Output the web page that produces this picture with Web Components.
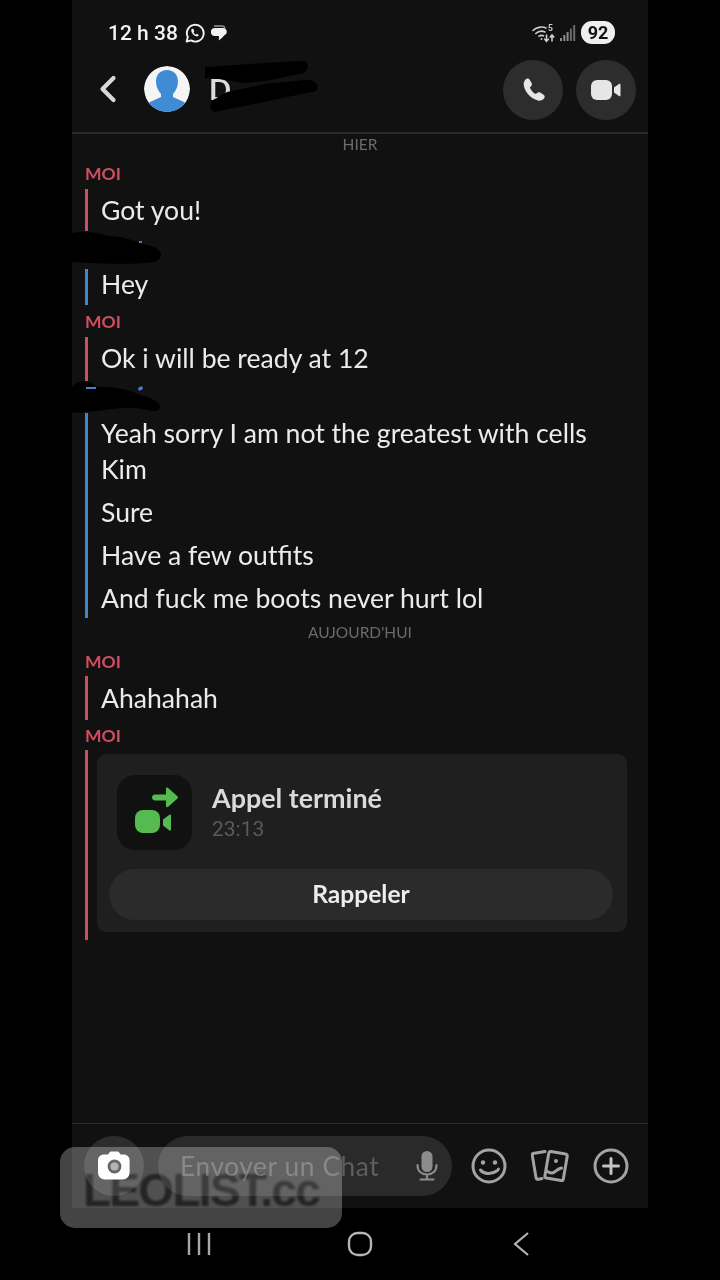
<!DOCTYPE html>
<html lang="fr"><head><meta charset="utf-8"><title>Chat</title>
<style>
html,body{margin:0;padding:0;background:#000;height:1280px;overflow:hidden}
body{font-family:Lato,"Open Sans",sans-serif;color:#e9e9e9;position:relative}
</style></head><body>
<x-phone>
  <x-status-bar slot="top"></x-status-bar>
  <x-chat-header slot="top"></x-chat-header>
  <x-day style="height:23px;--pt:1px">HIER</x-day>
  <x-sender kind="me">MOI</x-sender>
  <x-group kind="me" style="--pt:3px;--pb:3px"><x-msg>Got you!</x-msg></x-group>
  <x-sender kind="other" style="height:38px">&#160;</x-sender>
  <x-group kind="other" style="--pt:0px;--pb:0px"><x-msg style="margin-top:-3px;margin-bottom:3px">Hey</x-msg></x-group>
  <x-sender kind="me">MOI</x-sender>
  <x-group kind="me" style="--pt:3px;--pb:5px"><x-msg>Ok i will be ready at 12</x-msg></x-group>
  <x-sender kind="other">&#160;</x-sender>
  <x-group kind="other" style="--pt:2px;--pb:2px;--gap:7px">
    <x-msg>Yeah sorry I am not the greatest with cells<br>Kim</x-msg>
    <x-msg>Sure</x-msg>
    <x-msg>Have a few outfits</x-msg>
    <x-msg>And fuck me boots never hurt lol</x-msg>
  </x-group>
  <x-day style="height:28px;--pt:5px">AUJOURD'HUI</x-day>
  <x-sender kind="me" style="height:30px">MOI</x-sender>
  <x-group kind="me" style="--pt:4px;--pb:4px"><x-msg>Ahahahah</x-msg></x-group>
  <x-sender kind="me" style="height:30px">MOI</x-sender>
  <x-group kind="me" style="--pt:4px;--pb:8px;--pl:9px"><x-call-card></x-call-card></x-group>
  <x-composer slot="bottom"></x-composer>
</x-phone>
<x-nav-bar></x-nav-bar>
<x-scribble style="left:205px;top:60px" w="114" h="54" d="M0 7L60 3 98 1c6 0 6 9 1 12L60 21 40 23 14 19 0 18zM22 32l38-8 40-4c12-1 14 6 11 11L10 52c-5-1-6-8-2-12z"></x-scribble>
<x-scribble style="left:72px;top:231px" w="90" h="34" mark="M67 10h3v2h-3z" d="M0 2C12 0 26 1 36 5c14 0 28 5 38 9 8 1 15 4 15 10 0 6-8 8-18 8-22 2-50 0-71-1z"></x-scribble>
<x-scribble style="left:72px;top:379px" w="89" h="34" mark="M66 9l4-2 1 3-4 2zM14 8h10v2H14z" d="M0 8C6 1 16 0 24 8c16-1 34 3 44 8 10 2 20 7 20 12 0 4-6 5-12 3-16-4-30-2-44 0-12 1-24 4-32 2z"></x-scribble>
<x-watermark>LEOLIST.cc</x-watermark>
<script>
function def(name, css, html, init){
  customElements.define(name, class extends HTMLElement{
    constructor(){super();const s=this.attachShadow({mode:'open'});s.innerHTML='<style>'+css+'</style>'+html;}
    connectedCallback(){if(init)init(this,this.shadowRoot);}
  });
}
def('x-phone',`
:host{display:flex;flex-direction:column;width:576px;height:1208px;margin-left:72px;background:#111112}
main{flex:1;display:flex;flex-direction:column;min-height:0}
`,`<slot name="top"></slot><main><slot></slot></main><slot name="bottom"></slot>`);

def('x-status-bar',`
:host{display:flex;align-items:center;height:62px;padding:3px 33px 0 36px;box-sizing:border-box;color:#f2f2f2;font-family:Roboto,sans-serif}
.t{font-size:21px;font-weight:500;letter-spacing:0}
svg{display:block}
.l{display:flex;align-items:center;gap:5px;margin-left:8px}
.sp{flex:1}
.r{display:flex;align-items:center;gap:4px}
.b{background:#efefef;color:#111;font-weight:700;font-size:18px;width:34px;height:23px;border-radius:11px;display:flex;align-items:center;justify-content:center;margin-left:1px}
`,`<span class="t">12 h 38</span>
<span class="l">
<svg width="20" height="20" viewBox="0 0 20 20" fill="none" stroke="#f2f2f2" stroke-width="1.9" style="margin-left:-1px"><path d="M1.600 18.600l1.200-4.600A8.400 8.400 0 1 1 6 17.400z" stroke-linejoin="round"/><path d="M7 5.800c-.9.7-1 2-.2 3.600 1 2 2.600 3.300 4.400 3.900 1.200.3 2.200-.2 2.600-1.200l-1.900-1.300-1 .9c-.9-.4-1.900-1.400-2.400-2.500l.8-1-.9-2.200z" fill="#f2f2f2" stroke="none"/></svg>
<svg width="18" height="16" viewBox="0 0 18 16"><path d="M4 1h8a3 3 0 0 1 3 2" fill="none" stroke="#9a9a9a" stroke-width="1.500"/><path d="M5 3h8a3.800 3.800 0 0 1 1.400 7.300C13 12 10.800 14 8.800 15.500l.2-4.400H5A4 4 0 0 1 5 3z" fill="#f2f2f2"/></svg>
</span>
<span class="sp"></span>
<span class="r">
<svg width="25" height="20" viewBox="0 0 25 20" fill="none" stroke="#cfcfcf" stroke-width="1.600" stroke-linecap="round"><path d="M1 7.500C4 4.500 10 3 14 5"/><path d="M3.800 10.500C6.500 8 10.500 7.800 13 9"/><path d="M7 13.200c1.500-1 3.200-1 4.500-.4"/><circle cx="9.500" cy="16" r="1" fill="#cfcfcf" stroke="none"/><path d="M14.500 12v6M12.700 16.200l1.800 2 1.800-2M20 18v-6M18.200 14l1.800-2 1.800 2"/><text x="16" y="8" font-family="Roboto" font-size="8.500" font-weight="700" fill="#cfcfcf" stroke="none">5</text></svg>
<svg width="16" height="18" viewBox="0 0 16 18" style="margin-left:-1px"><g fill="#8a8a8a"><rect x="0" y="14" width="2" height="3"/><rect x="3.300" y="11" width="2" height="6"/><rect x="6.600" y="8" width="2" height="9"/><rect x="9.900" y="4.500" width="2" height="12.500" fill="#6a6a6a"/><rect x="13.200" y="1" width="2" height="16" fill="#6a6a6a"/></g></svg>
<span class="b">92</span>
</span>`);

def('x-chat-header',`
:host{display:flex;align-items:center;height:72px;box-sizing:border-box;padding:0 12px 14px 26px;border-bottom:2px solid #2a2a2b;font-family:Lato,sans-serif}
.back{display:block;margin-right:26px;margin-top:-2px}
.name{font-size:29px;font-weight:700;color:#dcdcdc;margin-left:19px;flex:1;margin-top:-3px}
.av{width:46px;height:46px;border-radius:50%;display:block;margin-top:-2px}
.btn{width:60px;height:60px;border-radius:50%;background:#2d2d2e;display:flex;align-items:center;justify-content:center;margin-left:13px;flex:none}
`,`<svg class="back" width="20" height="28" viewBox="0 0 20 28" fill="none" stroke="#d8d8d8" stroke-width="4.200" stroke-linecap="round" stroke-linejoin="round"><path d="M15.500 3L4.500 14l11 11"/></svg>
<svg class="av" viewBox="0 0 46 46"><circle cx="23" cy="23" r="23" fill="#f5f5f5"/><clipPath id="c"><circle cx="23" cy="23" r="23"/></clipPath><g clip-path="url(#c)" fill="#3f8bd6"><path d="M23 4c7 0 11 5 11 11.500 0 5-2.200 9.500-5 12.500v3l11 5c2.500 1.500 3 5 3 10H3c0-5 .5-8.500 3-10l11-5v-3c-2.800-3-5-7.500-5-12.500C12 9 16 4 23 4z"/></g></svg>
<span class="name">D</span>
<span class="btn"><svg width="28" height="28" viewBox="0 0 28 28" style="margin-left:4px"><path d="M4.500 3.500c1.200-1.200 3.300-1.300 4.200.2l2 3.600c.5 1 .3 2-.4 2.700l-1.500 1.400c.8 2.400 3.500 5.400 6 6.600l1.800-1.300c.8-.6 1.800-.6 2.600-.1l3.400 2.200c1.300.9 1.400 2.600.4 3.700-1.500 1.700-3.700 2.600-6 2-7.400-1.900-12.900-8.300-14.200-15-.5-2.400.4-4.500 1.700-6z" fill="#e6e6e6"/></svg></span>
<span class="btn"><svg width="30" height="20" viewBox="0 0 30 20" style="margin-left:-1px"><rect x="0" y="0" width="21" height="20" rx="6" fill="#e6e6e6"/><path d="M23 7.500l5-3.500c.8-.5 1.500 0 1.500.8v10.400c0 .8-.7 1.300-1.500.8l-5-3.500z" fill="#e6e6e6"/></svg></span>`);

def('x-day',`
:host{display:flex;justify-content:center;box-sizing:border-box;align-items:flex-start;padding-top:calc(var(--pt,1px) + 1px);font-size:15.500px;color:#6b6b6d;font-family:Lato,sans-serif;line-height:17px;flex:none;height:28px}
`,`<slot></slot>`);
def('x-sender',`
:host{display:flex;align-items:center;height:32px;padding-left:13px;font-size:17.500px;font-weight:700;color:#d04c60;font-family:Lato,sans-serif;flex:none;box-sizing:border-box}
`,`<slot></slot>`);
def('x-group',`
:host{display:flex;flex-direction:column;gap:var(--gap,0px);margin-left:13px;border-left:3px solid #d04c60;padding:var(--pt,0) 0 var(--pb,0) var(--pl,13px);flex:none}
:host([kind=other]){border-left-color:#3f86cc}
`,`<slot></slot>`);
def('x-msg',`
:host{display:block;font-size:26.600px;line-height:36px;color:#ebebeb;font-family:Lato,sans-serif}
`,`<slot></slot>`);
def('x-call-card',`
:host{display:block;width:530px;height:178px;background:#1f1f20;border-radius:9px;box-sizing:border-box;padding:21px 14px 12px 12px;font-family:Lato,sans-serif}
.row{display:flex;height:75px;padding-left:8px;gap:20px;align-items:center}
.ic{width:75px;height:75px;border-radius:18px;background:#111112;flex:none}
.ic svg{display:block}
.ti{font-size:26.900px;font-weight:700;color:#dadada;line-height:32px;margin-top:-1px}
.tm{font-size:21px;color:#5a5a5c;line-height:26px;font-family:Roboto,sans-serif;margin-top:2px}
.btn{margin-top:19px;height:51px;border-radius:26px;background:#2b2b2c;display:flex;align-items:center;justify-content:center;font-size:24.600px;font-weight:700;color:#ededed;padding-bottom:2px;box-sizing:border-box}
`,`<div class="row"><div class="ic"><svg width="75" height="75" viewBox="0 0 75 75"><g fill="#55ba50"><path d="M38 19.500h11v-5.500c0-1.300 1.100-1.800 2.200-1l9 8c.9.800.9 2 0 2.800l-9 8c-1.100.8-2.200.3-2.200-1v-5.300H38c-4 0-4-6 0-6z"/><rect x="18" y="35" width="25" height="23" rx="8"/><path d="M46 44.500l6.500-4.700c.8-.6 1.500-.2 1.500.8v14c0 1-.7 1.400-1.500.8L46 50.500z"/></g></svg></div>
<div><div class="ti">Appel terminé</div><div class="tm">23:13</div></div></div>
<div class="btn">Rappeler</div>`);

def('x-composer',`
:host{display:flex;align-items:center;height:85px;box-sizing:border-box;border-top:1px solid #2b2b2c;padding:0 19px 0 12px;font-family:Lato,sans-serif}
.cam{width:60px;height:60px;border-radius:50%;background:#2d2d2e;display:flex;align-items:center;justify-content:center;flex:none}
.in{width:294px;height:60px;border-radius:30px;background:#2a2a2b;margin-left:14px;display:flex;align-items:center;padding:0 14px 0 22px;box-sizing:border-box;font-size:26.300px;color:#5e5e60;flex:none}
.in span{flex:1;letter-spacing:.6px}
.ics{display:flex;align-items:center;margin-left:19px;gap:0;flex:1;justify-content:space-between}
svg{display:block}
`,`<div class="cam"><svg width="34" height="30" viewBox="0 0 34 30"><path d="M11 3.500l1.500-2c.4-.6 1-.9 1.700-.9h6.200c.7 0 1.300.3 1.700.9l1.500 2h3c3.500 0 6 2.500 6 6v12c0 4-3 7-7 7H8c-4 0-7-3-7-7v-12c0-3.500 2.500-6 6-6z" fill="#fff"/><circle cx="17.500" cy="15.500" r="5.500" fill="#999" stroke="#2f2f2f" stroke-width="2.800"/></svg></div>
<div class="in"><span>Envoyer un Chat</span><svg width="22" height="30" viewBox="0 0 22 30" fill="none"><rect x="5.500" y="0" width="11" height="21" rx="5.500" fill="#8c8c8c"/><path d="M1.500 14c0 6 4 9.500 9.500 9.500s9.500-3.500 9.500-9.500M11 23.500V28M4.500 28.500h13" stroke="#8c8c8c" stroke-width="2.200" stroke-linecap="round"/></svg></div>
<div class="ics">
<svg width="36" height="36" viewBox="0 0 36 36" fill="none" stroke="#a3a3a3" stroke-width="3"><circle cx="18" cy="18" r="16"/><circle cx="12" cy="14.500" r="2.200" fill="#a3a3a3" stroke="none"/><circle cx="24" cy="14.500" r="2.200" fill="#a3a3a3" stroke="none"/><path d="M9.500 22c3 4 11 5 17 .5M26.500 22.500l1-1.500" stroke-linecap="round"/></svg>
<svg width="38" height="34" viewBox="0 0 38 34" fill="none" stroke="#a3a3a3" stroke-width="3" stroke-linejoin="round" stroke-linecap="round"><path d="M14 2.500L2 4.500c-.8.200-1 .7-.8 1.400L5 28.500c.2 1.500 1 2 2.500 1.800l3.500-.8"/><path d="M20 2.500l14.500 2.600c1.300.2 2 1 1.700 2.300l-3.900 22.500c-.2 1.200-1 1.800-2.200 1.600L15.500 29c-1.200-.2-1.800-1-1.600-2.200L17.800 4.300c.3-1.300 1-2 2.200-1.800z"/><circle cx="25" cy="12" r="2" fill="#a3a3a3" stroke="none"/><path d="M15.500 22c3 2 6 2.500 8 1s4-3.500 7-4" /></svg>
<svg width="36" height="36" viewBox="0 0 36 36" fill="none" stroke="#a3a3a3" stroke-width="3"><circle cx="18" cy="18" r="16"/><path d="M18 10.500v15M10.500 18h15" stroke="#c4c4c4" stroke-linecap="round"/></svg>
</div>`);

def('x-nav-bar',`
:host{display:flex;height:72px;width:720px;position:relative;align-items:center;justify-content:center;background:#000}
.c{width:161px;display:flex;justify-content:center}
svg{display:block}
`,`<div class="c"><svg width="24" height="24" viewBox="0 0 24 24" stroke="#a8a8a8" stroke-width="2.400"><path d="M2 1v22M12 1v22M22 1v22"/></svg></div>
<div class="c"><svg width="26" height="26" viewBox="0 0 26 26" fill="none" stroke="#b5b5b5" stroke-width="2.400"><rect x="2" y="2" width="22" height="22" rx="8.500"/></svg></div>
<div class="c"><svg width="18" height="26" viewBox="0 0 18 26" fill="none" stroke="#b5b5b5" stroke-width="2.200"><path d="M16 2L3 13l13 11"/></svg></div>`);

def('x-scribble',`:host{position:absolute;display:block;pointer-events:none}svg{display:block}`,`<svg><path class="a" fill="#000"/><path class="m" fill="#3f86cc"/></svg>`,(h,s)=>{
  const v=s.querySelector('svg');v.setAttribute('width',h.getAttribute('w'));v.setAttribute('height',h.getAttribute('h'));
  s.querySelector('.a').setAttribute('d',h.getAttribute('d'));
  const m=h.getAttribute('mark');if(m)s.querySelector('.m').setAttribute('d',m);
});
def('x-watermark',`
:host{position:absolute;left:60px;top:1147px;width:282px;height:81px;border-radius:15px;background:#444;mix-blend-mode:screen;display:flex;align-items:center;justify-content:center;padding-top:5px;box-sizing:border-box;font-family:"Liberation Sans",sans-serif;font-weight:700;font-size:46px;color:#141414;letter-spacing:-1.700px}
span{filter:blur(.8px)}
`,`<span><slot></slot></span>`);
</script>
</body></html>
